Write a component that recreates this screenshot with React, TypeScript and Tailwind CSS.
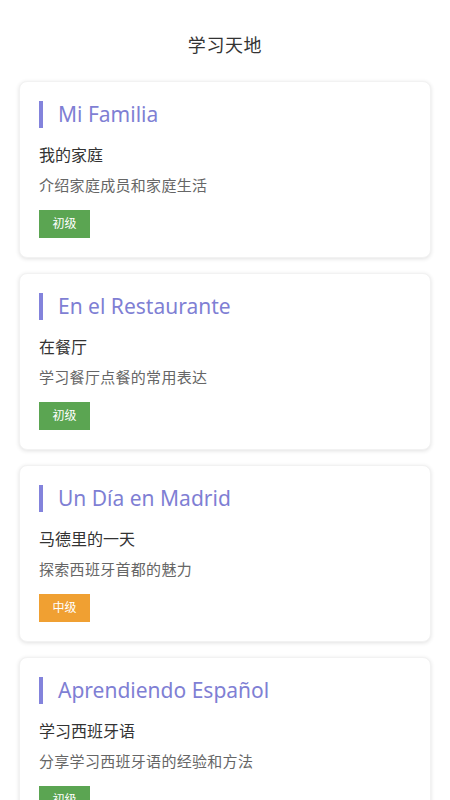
import React from "react";

type Item = { es: string; zh: string; desc: string; level: string; color: string };

const items: Item[] = [
  { es: "Mi Familia", zh: "我的家庭", desc: "介绍家庭成员和家庭生活", level: "初级", color: "bg-[#5ba552]" },
  { es: "En el Restaurante", zh: "在餐厅", desc: "学习餐厅点餐的常用表达", level: "初级", color: "bg-[#5ba552]" },
  { es: "Un Día en Madrid", zh: "马德里的一天", desc: "探索西班牙首都的魅力", level: "中级", color: "bg-[#f0a032]" },
  { es: "Aprendiendo Español", zh: "学习西班牙语", desc: "分享学习西班牙语的经验和方法", level: "初级", color: "bg-[#5ba552]" },
];

export default function App() {
  return (
    <div
      className="min-h-[800px] w-[450px] bg-white overflow-hidden"
      style={{ fontFamily: '"Noto Sans", "Noto Sans CJK SC", sans-serif' }}
    >
      <div className="pt-[33px] pb-[24px] text-center text-[18px] tracking-[0.6px] leading-[24px] text-[#333333]">
        学习天地
      </div>
      <div className="flex flex-col gap-[15px] px-[19px]">
        {items.map((it) => (
          <div
            key={it.es}
            className="rounded-[8px] bg-white border border-[#f2f2f2] shadow-[0_1px_4px_rgba(0,0,0,0.12)] pl-[19px] pr-[19px] pt-[19px] pb-[19px]"
          >
            <div className="flex items-center h-[27px]">
              <div className="w-[4px] h-[27px] bg-[#8383dc]" />
              <div className="ml-[15px] text-[21px] leading-[27px] text-[#7f7fd4]">{it.es}</div>
            </div>
            <div className="mt-[15px] text-[16px] leading-[24px] text-[#333333]">{it.zh}</div>
            <div className="mt-[7px] text-[15px] tracking-[0.3px] leading-[22px] text-[#666666]">{it.desc}</div>
            <div className="mt-[14px] flex">
              <div
                className={`${it.color} w-[51px] h-[28px] flex items-center justify-center text-[12px] text-white`}
              >
                {it.level}
              </div>
            </div>
          </div>
        ))}
      </div>
    </div>
  );
}
